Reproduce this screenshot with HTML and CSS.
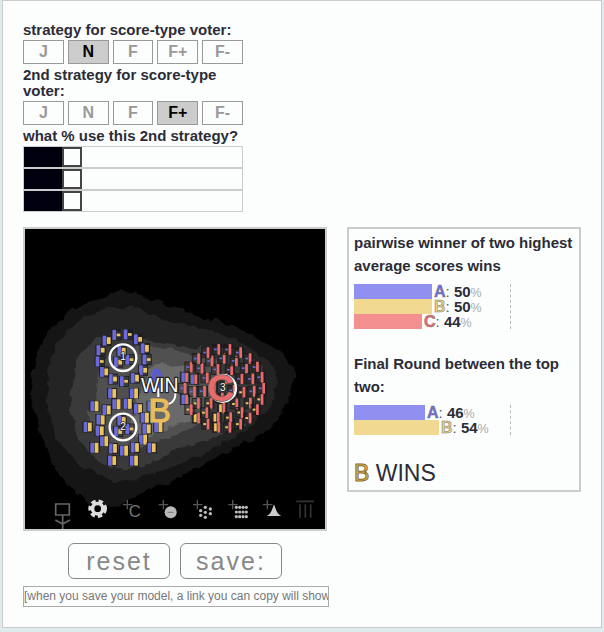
FILE: index.html
```html
<!DOCTYPE html>
<html lang="en">
<head>
<meta charset="utf-8">
<title>Voting model</title>
<link rel="stylesheet" href="styles.css">
</head>
<body>
<main class="panel">
  <div class="controls">
    <div class="label">strategy for score-type voter:</div>
    <div class="btns">
      <div class="btn">J</div><div class="btn on">N</div><div class="btn">F</div><div class="btn">F+</div><div class="btn">F-</div>
    </div>
    <div class="label">2nd strategy for score-type voter:</div>
    <div class="btns">
      <div class="btn">J</div><div class="btn">N</div><div class="btn">F</div><div class="btn on">F+</div><div class="btn">F-</div>
    </div>
    <div class="label">what % use this 2nd strategy?</div>
    <div class="sliders">
      <div class="slider"><div class="fill"></div><div class="handle"></div></div>
      <div class="slider"><div class="fill"></div><div class="handle"></div></div>
      <div class="slider"><div class="fill"></div><div class="handle"></div></div>
    </div>
  </div>
  <div class="main-row">
    <div class="left">
      <div class="canvas">
        <svg id="map" class="map" viewBox="15 12 900 900" width="300" height="300" xmlns="http://www.w3.org/2000/svg">
          <defs>
            <filter id="lumpy" x="-5%" y="-5%" width="110%" height="110%" color-interpolation-filters="sRGB">
              <feTurbulence type="fractalNoise" baseFrequency="0.03" numOctaves="2" seed="4" result="n"/>
              <feDisplacementMap in="SourceGraphic" in2="n" scale="28" xChannelSelector="R" yChannelSelector="G"/>
            </filter>
          </defs>
          <g class="blobs" filter="url(#lumpy)">
            <polygon class="l1" points="38,440 52,385 70,340 105,300 150,262 220,225 300,195 370,215 440,240 500,262 550,280 620,295 680,320 740,350 790,390 825,450 810,510 790,560 750,610 700,640 620,680 550,720 470,760 400,790 350,815 300,845 250,845 200,830 155,790 120,750 85,690 60,620 42,560 32,500"/>
            <polygon class="l2" points="80,470 95,385 150,310 205,270 265,245 330,250 380,262 440,285 500,300 580,320 650,345 710,380 760,420 772,470 745,555 700,600 640,640 580,675 520,700 460,725 400,745 345,765 290,772 230,750 180,720 140,680 110,640 85,560"/>
            <polygon class="l3" points="155,480 170,400 230,340 300,320 350,340 400,350 460,358 520,370 580,368 640,372 690,395 722,425 735,490 715,550 690,590 630,620 570,640 520,655 480,670 430,695 370,720 320,730 270,730 225,700 190,660 165,610 155,560"/>
            <polygon class="l4" points="228,490 240,440 260,400 300,370 370,360 420,368 500,385 560,395 600,410 560,560 530,600 480,625 420,650 360,670 300,680 250,650 210,610 200,560 230,530"/>
            <polygon class="l5" points="390,430 420,408 460,415 500,425 520,470 525,540 500,590 450,605 400,630 350,640 330,600 350,540 370,480"/>
          </g>
          <g id="voters"></g>
          <circle class="ring" cx="309" cy="398" r="40"/>
          <circle class="ring" cx="309" cy="606" r="40"/>
          <circle class="ring" cx="608" cy="490" r="40"/>
          <text class="num" x="309" y="384">1</text>
          <text class="num" x="309" y="592">2</text>
          <text class="cand cand-a" x="410" y="503">A</text>
          <path class="arc" d="M466 502 Q468 530 446 537 M415 490 V516"/>
          <text class="win" x="419" y="501">WIN</text>
          <text class="cand cand-b" x="419" y="590">B</text>
          <text class="cand cand-c" x="602" y="528">C</text>
          <text class="num" x="608" y="476">3</text>

          <path class="ic-line" d="M107 837 H148 V870 H107 Z M128 870 V912 M106 885 L128 897 L150 885"/>
          <circle class="gear-teeth" cx="233" cy="851" r="21"/>
          <circle class="gear-hole" cx="233" cy="851" r="10"/>
          <path class="ic-plus" d="M322 825 V853 M309 839 H337 M430 825 V853 M416 839 H444 M532 825 V853 M519 839 H547 M638 825 V853 M625 839 H653 M742 825 V853 M729 839 H757"/>
          <text class="ic-c" x="344" y="875">C</text>
          <circle class="ic-face" cx="452" cy="862" r="18"/>
          <path class="ic-dash" d="M443 862 H461"/>
          <g id="dots"></g>
          <path class="ic-bell" d="M740 873 C752 868 756 855 762 838 C768 855 772 868 784 873 Z"/>
          <path class="ic-cols" d="M829 829 H882 M840 838 V878 M856 838 V878 M872 838 V878"/>
        </svg>
      </div>
      <div class="actions">
        <div class="action">reset</div>
        <div class="action">save:</div>
      </div>
      <div class="link">[when you save your model, a link you can copy will show up here]</div>
    </div>
    <aside class="results">
      <div class="heading">pairwise winner of two highest average scores wins</div>
      <div class="chart">
        <div class="bar-row"><span class="bar bar-a b-50"></span><span class="mark m-a">A</span><span class="val">: <b>50</b><i>%</i></span></div>
        <div class="bar-row"><span class="bar bar-b b-50"></span><span class="mark m-b">B</span><span class="val">: <b>50</b><i>%</i></span></div>
        <div class="bar-row"><span class="bar bar-c b-44"></span><span class="mark m-c">C</span><span class="val">: <b>44</b><i>%</i></span></div>
      </div>
      <div class="heading second">Final Round between the top two:</div>
      <div class="chart">
        <div class="bar-row"><span class="bar bar-a b-46"></span><span class="mark m-a">A</span><span class="val">: <b>46</b><i>%</i></span></div>
        <div class="bar-row"><span class="bar bar-b b-54"></span><span class="mark m-b">B</span><span class="val">: <b>54</b><i>%</i></span></div>
      </div>
      <div class="winner"><span class="winner-mark">B</span> WINS</div>
    </aside>
  </div>
</main>
<script src="script.js"></script>
</body>
</html>
```
FILE: styles.css
```css
* { box-sizing: border-box; }
html, body { margin: 0; padding: 0; }
body {
  width: 604px;
  height: 632px;
  overflow: hidden;
  background: #e0ebee;
  font-family: "Liberation Sans", Arial, sans-serif;
  color: #2c2c36;
}
.panel {
  width: 600px;
  height: 628px;
  margin: 0 0 0 2px;
  padding: 21px 0 0 20px;
  background: #fcfefe;
  border: 1px solid #c8cccc;
}
.controls { width: 220px; }
.label {
  font-size: 15px;
  font-weight: 700;
  line-height: 16px;
}
.btns { display: flex; gap: 4px; margin: 2px 0 3px; }
.btn {
  width: 41px;
  height: 24px;
  border: 1px solid #999;
  background: #fcfefe;
  color: #999;
  font-size: 16px;
  font-weight: 700;
  line-height: 22px;
  text-align: center;
}
.btn.on { background: #ccc; color: #000; }
.sliders { margin-top: 2px; }
.slider {
  display: flex;
  height: 22px;
  border: 1px solid #ccc;
  background: #fcfefe;
}
.fill { width: 38px; background: #00000f; }
.handle { width: 20px; border: 2px solid #444; background: #fcfefe; }

.main-row { display: flex; margin-top: 15px; align-items: flex-start; }
.left { width: 306px; }
.canvas {
  width: 304px;
  height: 304px;
  border: 2px solid #ccc;
  background: #000;
}
.map { display: block; }
.l1 { fill: #151515; }
.l2 { fill: #242424; }
.l3 { fill: #3a3a3a; }
.l4 { fill: #505050; }
.l5 { fill: #6a6a6a; }
.v-box { fill: #000; fill-opacity: 0.25; stroke: #1c1c1c; stroke-width: 2.5; }
.v-blue { fill: #6a6ae0; }
.v-yellow { fill: #eec45e; }
.v-red { fill: #ee6a6a; }
.ring { fill: none; stroke: #fff; stroke-width: 7; }
.num {
  fill: #fff;
  font-size: 30px;
  text-anchor: middle;
  dominant-baseline: hanging;
  stroke: #222;
  stroke-width: 4px;
  paint-order: stroke;
}
.cand { text-anchor: middle; paint-order: stroke; }
.cand-a { fill: #5a5ad6; font-size: 104px; font-weight: 700; }
.cand-b { fill: #e9bd5a; font-size: 102px; stroke: #e9bd5a; stroke-width: 3px; }
.cand-c { fill: #e86a6a; font-size: 112px; font-weight: 700; stroke: #555; stroke-width: 4px; }
.win {
  fill: #fff;
  font-size: 58px;
  text-anchor: middle;
  stroke: #222;
  stroke-width: 7px;
  paint-order: stroke;
}
.arc { fill: none; stroke: #fff; stroke-width: 6; }
.ic-line { fill: none; stroke: #666; stroke-width: 5; }
.gear-teeth { fill: #ddd; stroke: #ddd; stroke-width: 14; stroke-dasharray: 12 8.2; }
.gear-hole { fill: #000; }
.ic-plus { fill: none; stroke: #555; stroke-width: 4; }
.ic-c { fill: #777; font-size: 50px; text-anchor: middle; }
.ic-face { fill: #bbb; }
.ic-dash { stroke: #777; stroke-width: 3; }
.ic-dot { fill: #bbb; }
.ic-bell { fill: #ccc; }
.ic-cols { fill: none; stroke: #333; stroke-width: 5; }

.actions { display: flex; gap: 10px; margin-top: 12px; padding-left: 45px; }
.action {
  width: 102px;
  height: 36px;
  border: 1px solid #888;
  border-radius: 6px;
  color: #888;
  font-size: 25px;
  line-height: 34px;
  letter-spacing: 2px;
  text-align: center;
}
.link {
  margin-top: 7px;
  height: 21px;
  border: 1px solid #aaa;
  color: #777;
  font-size: 12px;
  line-height: 19px;
  white-space: nowrap;
  overflow: hidden;
}

.results {
  width: 234px;
  height: 265px;
  margin-left: 18px;
  padding: 2px 5px 0;
  border: 2px solid #ccc;
}
.heading {
  font-size: 15px;
  font-weight: 700;
  line-height: 23px;
}
.heading.second { margin-top: 23px; }
.chart {
  width: 157px;
  margin-top: 7px;
  border-right: 1px dashed #bbb;
}
.bar-row { display: flex; align-items: center; height: 15px; font-size: 15px; white-space: nowrap; }
.bar { display: block; height: 15px; }
.bar-a { background: #9090f0; }
.bar-b { background: #f2d992; }
.bar-c { background: #f49090; }
.b-50 { width: 78px; }
.b-44 { width: 68px; }
.b-46 { width: 71px; }
.b-54 { width: 85px; }
.mark { font-weight: 700; font-size: 16px; margin-left: 2px; -webkit-text-stroke: 0.5px #777; }
.m-a { color: #6f6fe0; }
.m-b { color: #edcf80; }
.m-c { color: #e86a6a; }
.val { color: #555; }
.val b { color: #2c2c36; }
.val i { font-style: normal; font-size: 12.5px; color: #aaa; }
.winner { margin-top: 25px; font-size: 23px; line-height: 26px; }
.winner-mark { color: #eec45e; -webkit-text-stroke: 1px #8a6a20; }
```
FILE: script.js
```js
(function () {
  var NS = "http://www.w3.org/2000/svg";
  var voters = document.getElementById("voters");
  function rect(parent, cls, x, y, w, h) {
    var r = document.createElementNS(NS, "rect");
    r.setAttribute("class", cls);
    r.setAttribute("x", x);
    r.setAttribute("y", y);
    r.setAttribute("width", w);
    r.setAttribute("height", h);
    parent.appendChild(r);
  }
  function voter(x, y, a, ah, b, bh, w) {
    var bw = w || 11;
    rect(voters, "v-box", x - 14, y - 15, 28, 30);
    rect(voters, "v-" + a, x - bw - 1, y - ah / 2, bw, ah);
    rect(voters, "v-" + b, x + 1, y - bh / 2, bw, bh);
  }
  function ring(cx, cy, r, n, phase, make) {
    for (var i = 0; i < n; i++) {
      var t = phase + (i / n) * Math.PI * 2;
      make(cx + r * Math.cos(t), cy + r * Math.sin(t), i);
    }
  }
  function c1(x, y, i) { voter(x, y, "blue", 30, "yellow", 8 + (i % 3) * 6); }
  function c2(x, y, i) { voter(x, y, "blue", 30, "yellow", 30 - (i % 2) * 4); }
  function c3(x, y, i) {
    var up = y < 500;
    if (x < 530 && i % 2 === 0) voter(x, y, "blue", 28, "red", 28, 8);
    else if (up) voter(x, y, "blue", 5, "red", 32, 8);
    else if (x < 620 && y > 540 && i % 2 === 0) voter(x, y, "yellow", 24, "red", 32, 8);
    else voter(x, y, "yellow", 6, "red", 32, 8);
  }
  ring(309, 398, 20, 3, 0.3, c1);
  ring(309, 398, 71, 13, -1.57 + 0.2, c1);
  ring(309, 606, 20, 3, 0.3, c1);
  ring(309, 606, 71, 13, -1.57 + 0.2, c2);
  ring(309, 606, 106, 10, 0, c2);
  ring(608, 490, 30, 4, 0.2, c3);
  ring(608, 490, 60, 9, 0.2, c3);
  ring(608, 490, 90, 15, 0.1, c3);
  ring(608, 490, 118, 22, 0, c3);

  var dots = document.getElementById("dots");
  function dot(x, y, r) {
    var c = document.createElementNS(NS, "circle");
    c.setAttribute("class", "ic-dot");
    c.setAttribute("cx", x);
    c.setAttribute("cy", y);
    c.setAttribute("r", r);
    dots.appendChild(c);
  }
  [[556, 847], [571, 852], [542, 857], [556, 862], [571, 866], [542, 871], [556, 877]].forEach(function (p) { dot(p[0], p[1], 5); });
  for (var row = 0; row < 3; row++) {
    for (var col = 0; col < 4; col++) dot(649 + col * 10, 847 + row * 14, 4.8);
  }
})();
```
